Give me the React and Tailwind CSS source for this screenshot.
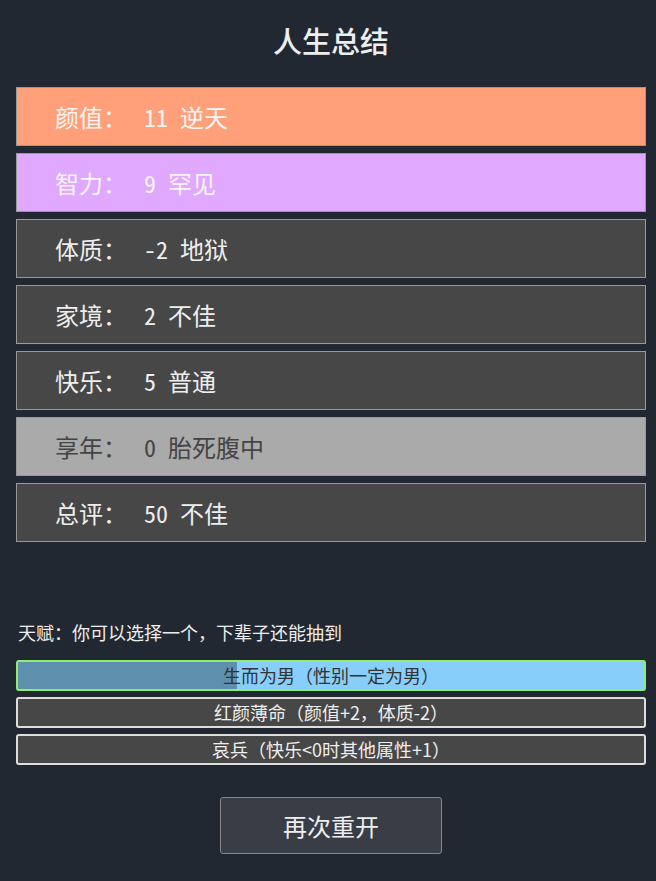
import React from 'react';

const stats = [
  { label: '颜值', value: '11 逆天', cls: 'bg-[#ffa07a] text-[#f5f5f5]' },
  { label: '智力', value: '9 罕见', cls: 'bg-[#e0a8ff] text-[#f5f5f5]' },
  { label: '体质', value: '-2 地狱', cls: 'bg-[#474747] text-[#eeeeee]' },
  { label: '家境', value: '2 不佳', cls: 'bg-[#474747] text-[#eeeeee]' },
  { label: '快乐', value: '5 普通', cls: 'bg-[#474747] text-[#eeeeee]' },
  { label: '享年', value: '0 胎死腹中', cls: 'bg-[#aaaaaa] text-[#444444]' },
  { label: '总评', value: '50 不佳', cls: 'bg-[#474747] text-[#eeeeee]' },
];

const talents = [
  { name: '红颜薄命（颜值+2，体质-2）' },
  { name: '哀兵（快乐<0时其他属性+1）' },
];

export default function App() {
  return (
    <div
      className="min-h-[881px] w-[656px] bg-[#222831] text-[#eeeeee] flex flex-col pl-4 pr-[10px]"
      style={{ fontFamily: '"Noto Sans CJK SC", "Noto Sans", sans-serif' }}
    >
      <h1 className="text-center text-[29px] font-medium pt-[19px] h-[87px] leading-[42px]">人生总结</h1>

      <div className="flex flex-col gap-[7px]">
        {stats.map((s) => (
          <div
            key={s.label}
            className={`h-[59px] border border-[#999999] flex items-center pl-[38px] text-[24px] ${s.cls}`}
          >
            <span className="w-[89px]">{s.label}：</span>
            <span className="whitespace-pre [font-feature-settings:'hwid']">{s.value}</span>
          </div>
        ))}
      </div>

      <p className="mt-[78px] pl-[2px] text-[18px] leading-[24px]">天赋：你可以选择一个，下辈子还能抽到</p>

      <div className="flex flex-col gap-[6px] mt-[16px]">
        <div className="relative h-[31px] rounded-[3px] border-2 border-[#8fee72] bg-[#87cefa] overflow-hidden flex items-center justify-center text-[18px] text-[#333333]">
          <div className="absolute left-0 top-0 bottom-0 w-[219px] bg-[#5e8fac]" />
          <span className="relative">生而为男（性别一定为男）</span>
        </div>
        {talents.map((t) => (
          <div
            key={t.name}
            className="h-[31px] rounded-[3px] border-2 border-[#dddddd] bg-[#474747] flex items-center justify-center text-[18px] text-[#eeeeee]"
          >
            {t.name}
          </div>
        ))}
      </div>

      <div className="flex justify-center mt-[32px]">
        <button className="w-[222px] h-[57px] rounded-[3px] border border-[#888888] bg-[#393e46] text-[24px] text-[#eeeeee]">
          再次重开
        </button>
      </div>
    </div>
  );
}
